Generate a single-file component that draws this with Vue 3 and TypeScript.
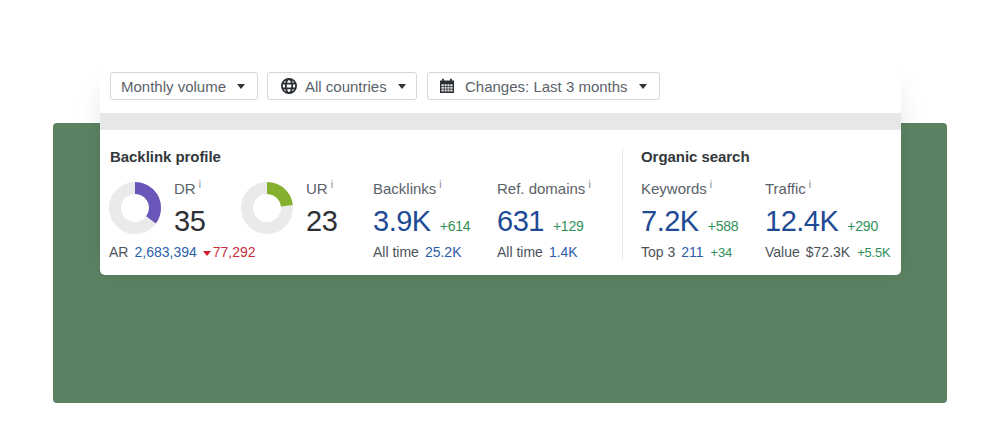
<template>
  <div class="page">
    <div class="green"></div>
    <div class="card">
      <div class="filters">
        <button class="filter monthly">
          <span>Monthly volume</span>
          <i class="caret"></i>
        </button>
        <button class="filter countries">
          <svg class="icon" viewBox="0 0 16 16">
            <circle cx="8" cy="8" r="7.1" fill="none" stroke="#2b2f33" stroke-width="1.8" />
            <ellipse cx="8" cy="8" rx="3.2" ry="7" fill="none" stroke="#2b2f33" stroke-width="1.8" />
            <path d="M1 5.6h14M1 10.4h14" stroke="#2b2f33" stroke-width="1.8" />
          </svg>
          <span>All countries</span>
          <i class="caret"></i>
        </button>
        <button class="filter changes">
          <svg class="icon" viewBox="0 0 16 16">
            <path d="M1 2.5h14V15H1z" fill="#2b2f33" />
            <path d="M4 .8v3M12 .8v3" stroke="#2b2f33" stroke-width="1.8" />
            <path d="M2.4 6.2h2.4v1.9H2.4zM5.5 6.2h2.2v1.9H5.5zM8.4 6.2h2.2v1.9H8.4zM11.3 6.2h2.3v1.9h-2.3zM2.4 8.8h2.4v1.9H2.4zM5.5 8.8h2.2v1.9H5.5zM8.4 8.8h2.2v1.9H8.4zM11.3 8.8h2.3v1.9h-2.3zM2.4 11.4h2.4v2.1H2.4zM5.5 11.4h2.2v2.1H5.5zM8.4 11.4h2.2v2.1H8.4zM11.3 11.4h2.3v2.1h-2.3z" fill="#dfe0e1" />
          </svg>
          <span>Changes: Last 3 months</span>
          <i class="caret"></i>
        </button>
      </div>
      <div class="body">
        <div class="strip"></div>
        <div class="panels">
          <section class="panel backlink">
            <h3>Backlink profile</h3>
            <div class="metrics">
              <div class="rating dr">
                <div class="donut-row">
                  <svg class="donut" viewBox="0 0 52 52">
                    <circle cx="26" cy="26" r="20" fill="none" stroke="#e8eaec" stroke-width="12" />
                    <circle cx="26" cy="26" r="20" fill="none" stroke="#6a55b9" stroke-width="12"
                      :stroke-dasharray="dash(35)" transform="rotate(-90 26 26)" />
                  </svg>
                  <div>
                    <div class="label">DR<sup>i</sup></div>
                    <div class="big dark">35</div>
                  </div>
                </div>
              </div>
              <div class="rating ur">
                <div class="donut-row">
                  <svg class="donut" viewBox="0 0 52 52">
                    <circle cx="26" cy="26" r="20" fill="none" stroke="#e8eaec" stroke-width="12" />
                    <circle cx="26" cy="26" r="20" fill="none" stroke="#85b02f" stroke-width="12"
                      :stroke-dasharray="dash(23)" transform="rotate(-90 26 26)" />
                  </svg>
                  <div>
                    <div class="label">UR<sup>i</sup></div>
                    <div class="big dark">23</div>
                  </div>
                </div>
              </div>
              <div v-for="m in backlinkStats" :key="m.label" class="stat" :class="m.cls">
                <div class="label">{{ m.label }}<sup>i</sup></div>
                <div class="value-row"><span class="big">{{ m.value }}</span><span class="up">{{ m.delta }}</span></div>
                <div class="sub">{{ m.subLabel }}<a>{{ m.subValue }}</a></div>
              </div>
            </div>
            <div class="ar">AR<a>2,683,394</a><span class="down"><i class="down-caret"></i>77,292</span></div>
          </section>
          <section class="panel organic">
            <h3>Organic search</h3>
            <div class="metrics">
              <div class="stat keywords">
                <div class="label">Keywords<sup>i</sup></div>
                <div class="value-row"><span class="big">7.2K</span><span class="up">+588</span></div>
                <div class="sub">Top 3<a>211</a><span class="up small">+34</span></div>
              </div>
              <div class="stat traffic">
                <div class="label">Traffic<sup>i</sup></div>
                <div class="value-row"><span class="big">12.4K</span><span class="up">+290</span></div>
                <div class="sub">Value<b>$72.3K</b><span class="up small">+5.5K</span></div>
              </div>
            </div>
          </section>
        </div>
      </div>
    </div>
  </div>
</template>

<script setup lang="ts">
const circumference = 2 * Math.PI * 20

const dash = (pct: number) => `${(circumference * pct) / 100} ${circumference}`

const backlinkStats = [
  { label: 'Backlinks', value: '3.9K', delta: '+614', subLabel: 'All time', subValue: '25.2K', cls: 'backlinks' },
  { label: 'Ref. domains', value: '631', delta: '+129', subLabel: 'All time', subValue: '1.4K', cls: 'refdomains' }
]
</script>

<style>
html,
body {
  margin: 0;
  background: #fff;
}
</style>

<style scoped>
.page {
  position: relative;
  width: 1000px;
  height: 448px;
  padding: 123px 53px 45px;
  box-sizing: border-box;
  background: #fff;
  overflow: hidden;
  font-family: "Liberation Sans", Arial, sans-serif;
}

.green {
  height: 280px;
  background: #5c8263;
  border-radius: 4px;
}

/* card sits over the green block */
.card {
  position: absolute;
  left: 100px;
  top: 60px;
  width: 801px;
}

/* soft haze that only starts partway down the filter row */
.card::before {
  content: "";
  position: absolute;
  top: 28px;
  left: 0;
  right: 0;
  bottom: 0;
  border-radius: 5px;
  box-shadow: 0 0 26px rgba(0, 0, 0, 0.09);
}

.filters {
  position: relative;
  display: flex;
  height: 53px;
  padding: 12px 0 0 10px;
  box-sizing: border-box;
  background: #fff;
}

.filter {
  display: flex;
  align-items: center;
  height: 28px;
  padding: 0 0 0 10px;
  box-sizing: border-box;
  background: #fff;
  border: 1px solid #d5d8da;
  border-radius: 3px;
  font: 15px "Liberation Sans", Arial, sans-serif;
  color: #5b6269;
}

.monthly {
  width: 148px;
  margin-right: 9px;
}

.countries {
  width: 150px;
  margin-right: 10px;
  padding-left: 13px;
}

.changes {
  width: 233px;
  padding-left: 11px;
}

.icon {
  width: 16px;
  height: 16px;
  margin-right: 8px;
}

.changes .icon {
  margin-right: 10px;
}

.caret {
  width: 0;
  height: 0;
  margin-left: 11px;
  border-left: 4.5px solid transparent;
  border-right: 4.5px solid transparent;
  border-top: 5px solid #2f3438;
}

.body {
  position: relative;
  background: #fff;
  border-radius: 0 0 5px 5px;
}

.strip {
  height: 17px;
  background: #e5e7e9;
}

.panels {
  display: flex;
  height: 145px;
  padding-top: 18px;
  box-sizing: border-box;
}

.panel {
  box-sizing: border-box;
}

.backlink {
  position: relative;
  width: 523px;
  padding-left: 10px;
  border-right: 1px solid #e8eaec;
  height: 113px;
}

.organic {
  padding-left: 18px;
  height: 113px;
}

h3 {
  margin: 1px 0 0;
  font-size: 15px;
  line-height: 16px;
  font-weight: 700;
  letter-spacing: -0.05px;
  color: #33383d;
}

.metrics {
  display: flex;
  margin-top: 15px;
}

.backlink .metrics {
  margin-left: -1px;
}

.rating {
  width: 132px;
}

.donut-row {
  display: flex;
  gap: 13px;
}

.donut {
  width: 52px;
  height: 52px;
  margin-top: 2px;
}

.label {
  margin-bottom: 3px;
  font-size: 15px;
  line-height: 18px;
  color: #5b6269;
}

sup {
  font-size: 10px;
  line-height: 0;
  margin-left: 3px;
  color: #7d8389;
  vertical-align: 6px;
}

.big {
  font-size: 29px;
  line-height: 40px;
  letter-spacing: -0.5px;
  color: #1f4a96;
}

.big.dark {
  color: #2d3136;
}

.stat {
  white-space: nowrap;
}

.value-row {
  display: flex;
  align-items: baseline;
  gap: 9px;
}

.up {
  font-size: 14px;
  color: #2f9058;
  letter-spacing: -0.2px;
}

.up.small {
  font-size: 13px;
  margin-left: 7px;
}

.sub {
  margin-top: 3px;
  font-size: 14px;
  line-height: 16px;
  color: #4c5258;
}

.sub a {
  margin-left: 6px;
  color: #2c5ea8;
}

.sub b {
  margin-left: 6px;
  font-weight: 400;
  color: #4c5258;
}

.backlinks {
  width: 124px;
}

.refdomains {
  width: 120px;
}

.keywords {
  width: 124px;
}

.ar {
  position: absolute;
  left: 9px;
  top: 96px;
  font-size: 14px;
  line-height: 16px;
  color: #4c5258;
  white-space: nowrap;
}

.ar a {
  margin-left: 6px;
  color: #2c5ea8;
}

.down {
  margin-left: 6px;
  color: #c9303c;
}

.down-caret {
  display: inline-block;
  width: 0;
  height: 0;
  margin-right: 2px;
  vertical-align: 1px;
  border-left: 4px solid transparent;
  border-right: 4px solid transparent;
  border-top: 5px solid #d0202e;
}
</style>
